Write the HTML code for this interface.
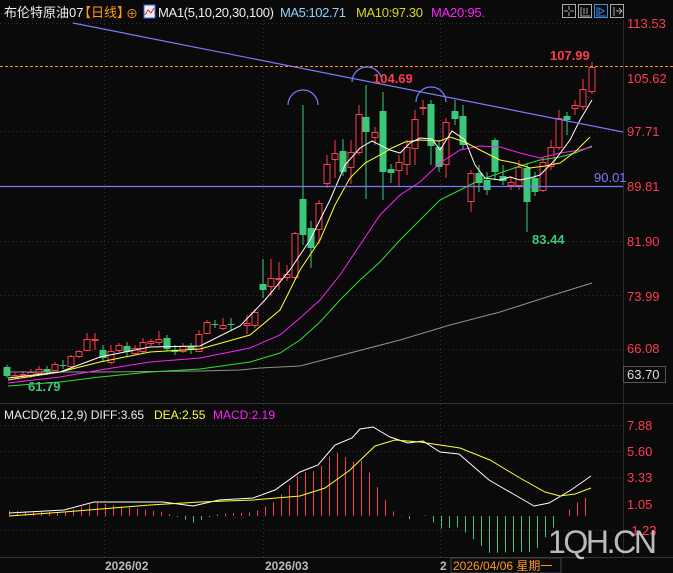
<!DOCTYPE html>
<html><head><meta charset="utf-8"><style>
html,body{margin:0;padding:0;background:#0a0a0a;width:673px;height:573px;overflow:hidden}
svg{display:block}
text{font-family:"Liberation Sans","Noto Sans CJK SC",sans-serif}
</style></head><body>
<svg id="s" width="673" height="573" viewBox="0 0 673 573" xmlns="http://www.w3.org/2000/svg">
<rect width="673" height="573" fill="#0a0a0a"/>
<g stroke="#2e2e2e" stroke-dasharray="1,3" stroke-width="1">
<line x1="104.5" y1="20" x2="104.5" y2="557"/><line x1="263.5" y1="20" x2="263.5" y2="557"/><line x1="440.5" y1="20" x2="440.5" y2="557"/>
<line x1="0" y1="23.5" x2="623" y2="23.5"/><line x1="0" y1="131.5" x2="623" y2="131.5"/><line x1="0" y1="241.5" x2="623" y2="241.5"/><line x1="0" y1="295.5" x2="623" y2="295.5"/><line x1="0" y1="349.5" x2="623" y2="349.5"/>
<line x1="0" y1="425.5" x2="623" y2="425.5"/><line x1="0" y1="451.5" x2="623" y2="451.5"/><line x1="0" y1="477.5" x2="623" y2="477.5"/><line x1="0" y1="530.5" x2="623" y2="530.5"/>
</g>
<line x1="0" y1="403.5" x2="673" y2="403.5" stroke="#333"/>
<line x1="0" y1="557.5" x2="673" y2="557.5" stroke="#333"/>
<line x1="623.5" y1="20" x2="623.5" y2="557" stroke="#2a2a2a"/>
<g id="cd"></g>
<g id="ma" fill="none" stroke-width="1"></g>
<line x1="73" y1="23" x2="623" y2="132" stroke="#7b7bff" stroke-width="1.2"/>
<line x1="0" y1="186.5" x2="623" y2="186.5" stroke="#7b7bff" stroke-width="1.2"/>
<line x1="0" y1="66.5" x2="673" y2="66.5" stroke="#ff8c1a" stroke-dasharray="3,2"/>
<g fill="none" stroke="#7b7bff" stroke-width="1.2">
<path d="M288,105 A15,15 0 0 1 318,105"/><path d="M352,82 A15,15 0 0 1 382,82"/><path d="M416,102 A15,15 0 0 1 446,102"/>
</g>
<g id="hist"></g>
<polyline id="diff" fill="none" stroke="#fff" stroke-width="1"/>
<polyline id="dea" fill="none" stroke="#ffff30" stroke-width="1"/>
<g font-size="13" fill="#ff3b4e">
<text x="627" y="28">113.53</text><text x="627" y="83">105.62</text><text x="627" y="136">97.71</text><text x="627" y="191">89.81</text><text x="627" y="246">81.90</text><text x="627" y="301">73.99</text><text x="627" y="353">66.08</text>
<text x="627" y="430">7.88</text><text x="627" y="456">5.60</text><text x="627" y="482">3.33</text><text x="627" y="509">1.05</text><text x="627" y="535">-1.23</text>
</g>
<rect x="623.5" y="366.5" width="42" height="16" fill="none" stroke="#555"/>
<text x="627" y="379" font-size="13" fill="#ddd">63.70</text>
<g font-size="13" font-weight="bold">
<text x="373" y="83" fill="#ff3b4e">104.69</text>
<text x="550" y="60" fill="#ff3b4e">107.99</text>
<text x="594" y="182" fill="#7b7bff" font-weight="normal">90.01</text>
<text x="532" y="244" fill="#3cc87a">83.44</text>
<text x="28" y="391" fill="#3cc87a">61.79</text>
</g>
<text x="4" y="17" font-size="13" fill="#eee">布伦特原油07</text>
<text x="78" y="17" font-size="13" fill="#ff9a1e">【日线】</text>
<text x="126" y="18" font-size="12" fill="#ff9a1e">⊕</text>
<rect x="144" y="5" width="11" height="13" fill="#eee" stroke="#36f"/><polyline points="145,15 148,10 151,13 154,8" fill="none" stroke="#e22"/>
<text x="158" y="17" font-size="13" fill="#eee" textLength="116">MA1(5,10,20,30,100)</text>
<text x="280" y="17" font-size="13" fill="#8fd4ff" textLength="66">MA5:102.71</text>
<text x="356" y="17" font-size="13" fill="#d8d820" textLength="67">MA10:97.30</text>
<text x="431" y="17" font-size="13" fill="#ff20ff" textLength="54">MA20:95.</text>
<g fill="none" stroke="#aaa">
<rect x="562.5" y="4.5" width="13" height="13"/><rect x="578.5" y="4.5" width="13" height="13"/><rect x="594.5" y="4.5" width="13" height="13" stroke="#3a8fe0"/><rect x="610.5" y="4.5" width="13" height="13"/>
<path d="M569,6v4M569,12v4M564,11h4M570,11h4"/><path d="M581,7v9h9M584,8v6M587,8v6"/><path d="M597,7v9h9M599,8l5,3-5,3z" stroke="#3a8fe0"/><path d="M614,7v9M616,11h6M619,8l3,3-3,3"/>
</g>
<text x="4" y="419" font-size="12" fill="#eee">MACD(26,12,9) DIFF:3.65</text>
<text x="154" y="419" font-size="12" fill="#ffff30">DEA:2.55</text>
<text x="213" y="419" font-size="12" fill="#ff20ff">MACD:2.19</text>
<text x="548" y="553" font-size="32" fill="#cfcfcf" opacity="0.9" textLength="109">1QH.CN</text>
<g font-size="12" font-weight="bold" fill="#bbb">
<text x="105" y="570">2026/02</text><text x="265" y="570">2026/03</text><text x="440" y="570">2</text>
</g>
<rect x="451" y="558" width="110" height="15" fill="#0a0a0a" stroke="#444"/>
<text x="453" y="570" font-size="12" fill="#ff9a1e">2026/04/06 星期一</text>
</svg>
<script>
var NS="http://www.w3.org/2000/svg";
function el(p,t,a){var e=document.createElementNS(NS,t);for(var k in a)e.setAttribute(k,a[k]);p.appendChild(e);return e;}
var C=[[7,367,376,365,378,'g'],[15,375,377,373,379,'r'],[23,374,375,371,378,'r'],[31,372,375,369,378,'r'],[39,369,373,366,375,'r'],[47,369,372,366,375,'g'],[55,364,370,362,371,'r'],[63,365,366,360,369,'g'],[71,356,366,355,368,'r'],[79,351,356,350,358,'r'],[87,339,350,333,350,'r'],[95,339,340,333,350,'r'],[103,350,358,345,362,'g'],[111,351,362,345,364,'r'],[119,345,350,343,352,'r'],[127,346,352,342,356,'g'],[135,348,353,345,355,'r'],[143,342,351,338,353,'r'],[151,341,343,339,346,'r'],[159,339,342,331,345,'r'],[167,338,349,335,351,'g'],[175,350,352,345,355,'g'],[183,346,351,343,353,'r'],[191,346,350,343,354,'g'],[199,334,351,330,352,'r'],[207,322,333,320,334,'r'],[215,324,325,320,328,'g'],[223,325,328,318,330,'r'],[231,324,325,318,330,'g'],[247,323,325,315,334,'r'],[255,312,325,309,328,'r'],[263,284,290,259,298,'g'],[271,278,286,259,296,'r'],[279,278,279,262,290,'r'],[287,274,277,265,281,'r'],[295,233,277,232,280,'r'],[303,199,235,105,245,'g'],[311,228,248,221,268,'g'],[319,203,229,200,244,'r'],[327,164,183,155,188,'r'],[335,153,159,140,178,'r'],[343,151,172,139,176,'g'],[351,152,167,140,184,'r'],[359,114,152,105,155,'r'],[366,117,132,85,199,'g'],[375,132,137,127,145,'r'],[383,111,172,92,200,'g'],[391,169,173,164,183,'g'],[399,162,170,155,186,'r'],[407,147,164,140,175,'r'],[415,119,148,110,165,'r'],[423,107,108,100,115,'r'],[431,104,146,100,165,'g'],[439,147,167,140,172,'g'],[446,122,164,118,178,'r'],[455,111,119,100,125,'g'],[463,116,145,105,150,'g'],[471,173,201,170,212,'r'],[479,173,183,165,192,'g'],[487,180,190,172,195,'g'],[495,140,172,138,180,'g'],[503,176,181,165,185,'g'],[511,182,185,176,190,'r'],[519,167,185,160,190,'r'],[527,168,202,163,232,'g'],[535,178,192,172,196,'g'],[543,162,190,157,192,'r'],[551,147,166,140,170,'r'],[559,118,147,110,150,'r'],[567,116,120,112,135,'g'],[575,105,108,100,115,'r'],[583,89,106,79,110,'r'],[592,67,91,62,94,'r']];
var cd=document.getElementById('cd');
C.forEach(function(c){var col=c[5]=='r'?'#ff3b4e':'#3cc87a';
el(cd,'line',{x1:c[0],x2:c[0],y1:c[3],y2:c[1],stroke:col});el(cd,'line',{x1:c[0],x2:c[0],y1:c[2],y2:c[4],stroke:col});
var h=Math.max(c[2]-c[1],1);
if(c[5]=='r')el(cd,'rect',{x:c[0]-3,y:c[1]+.5,width:6,height:h,fill:'#0a0a0a',stroke:col});
else el(cd,'rect',{x:c[0]-3.5,y:c[1],width:7,height:h,fill:col});});
var ma=document.getElementById('ma');
function pl(p,col){el(ma,'polyline',{points:p,stroke:col});}
pl("8,372 100,372 200,371 240,370 260,368 300,366 400,340 450,325 500,312 550,296 592,283","#909090");
pl("8,386 60,382 100,377 150,372 200,369 250,362 280,353 300,340 320,322 340,300 360,280 380,262 400,240 420,220 440,200 460,190 480,180 500,173 520,166 540,160 560,157 575,153 592,146","#30e030");
pl("8,383 60,377 100,370 150,362 200,358 250,348 280,335 300,318 320,300 340,275 360,245 380,215 400,195 420,182 440,163 460,150 480,146 500,147 520,153 540,158 560,153 580,150 592,147","#ff20ff");
pl("8,380 60,372 100,362 150,352 200,349 250,335 280,310 300,270 320,240 335,205 350,178 365,163 380,155 392,148 405,142 420,140 440,141 450,137 465,142 480,150 500,160 515,163 530,168 545,166 560,163 575,152 590,137","#ffff30");
pl("8,378 60,372 100,357 150,347 200,346 240,326 265,300 290,270 310,240 330,200 345,165 360,148 372,141 390,150 400,153 410,143 420,138 432,139 440,150 452,131 465,140 475,165 485,178 500,180 510,177 520,180 530,178 540,175 555,160 570,140 580,120 592,100","#ffffff");
var D=[[9,513],[64,510],[94,502],[163,502],[193,506],[219,500],[253,498],[275,490],[300,472],[318,465],[335,445],[352,438],[360,429],[373,427],[390,437],[408,443],[423,441],[440,452],[459,454],[489,480],[515,495],[534,506],[549,503],[571,490],[591,476]];
var E=[[9,516],[64,512],[150,505],[200,502],[253,500],[300,496],[325,488],[350,470],[375,446],[395,440],[420,442],[460,448],[490,460],[520,478],[545,492],[560,496],[575,494],[591,488]];
document.getElementById('diff').setAttribute('points',D.map(function(p){return p.join(',')}).join(' '));
document.getElementById('dea').setAttribute('points',E.map(function(p){return p.join(',')}).join(' '));
function it(a,x){for(var i=0;i<a.length-1;i++){if(x<=a[i+1][0]){var t=(x-a[i][0])/(a[i+1][0]-a[i][0]);return a[i][1]+t*(a[i+1][1]-a[i][1]);}}return a[a.length-1][1];}
var hg=document.getElementById('hist');
for(var x=9;x<=592;x+=8){var v=(it(E,x)-it(D,x))*1.8;var z=516;
el(hg,'line',{x1:x+.5,x2:x+.5,y1:z,y2:z-v,stroke:v>=0?'#ff3b4e':'#3cc87a'});}
</script>
</body></html>
